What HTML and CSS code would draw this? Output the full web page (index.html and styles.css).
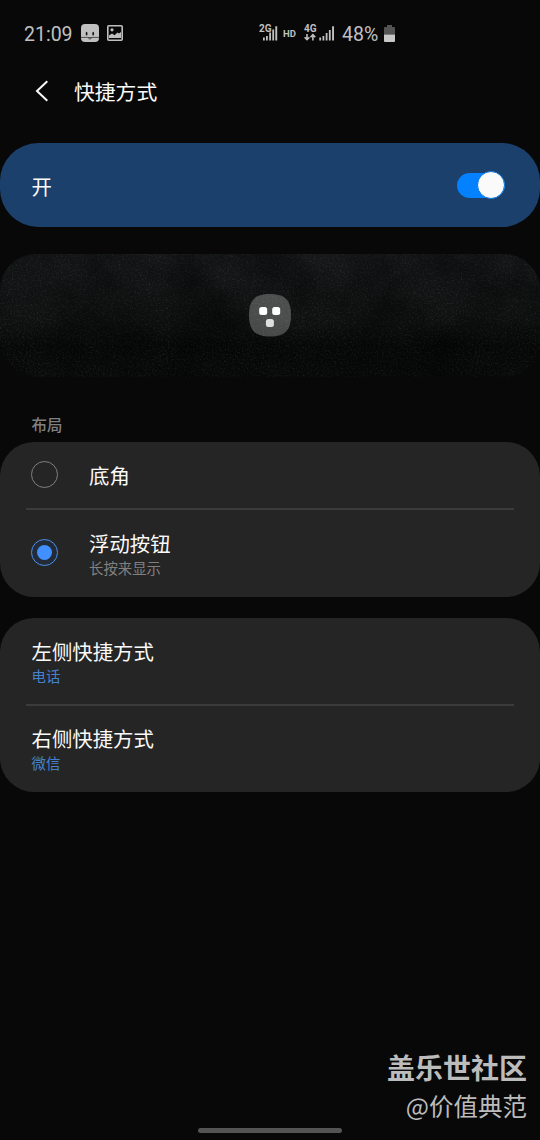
FILE: index.html
```html
<!DOCTYPE html>
<html lang="zh-CN">
<head>
<meta charset="utf-8">
<title>快捷方式</title>
<link rel="stylesheet" href="styles.css">
</head>
<body>
<div class="screen">
  <div class="status">
    <span class="clock">21:09</span>
    <svg class="bixby" width="18" height="18" viewBox="0 0 18 18"><path fill="#c0c0c0" d="M4 0h10q4 0 4 4v10q0 4-4 4H4q-4 0-4-4V4q0-4 4-4z"/><g fill="#161616"><ellipse cx="5.600" cy="9.700" rx=".9" ry="1.900"/><ellipse cx="12.200" cy="9.700" rx=".9" ry="1.900"/></g><path fill="none" stroke="#222" stroke-width=".7" d="M0 13.400h6.800q2.100 3.400 4.200 0h7M7 13.500h4"/></svg>
    <svg class="photo" width="16" height="16" viewBox="0 0 16 16"><rect x=".8" y=".8" width="14.400" height="14.400" rx="1" fill="none" stroke="#c0c0c0" stroke-width="1.600"/><path fill="#c0c0c0" d="M2 13v-2.500l3-2 2.500 1.800L10.500 7.500l1.500 1L14 7v6z"/><circle cx="5" cy="4.800" r="1.600" fill="#c0c0c0"/></svg>
    <svg class="signal" width="82" height="20" viewBox="0 0 82 20" fill="#c0c0c0">
      <text x="0" y="9" class="net">2G</text>
      <path d="M4 14.500h1.800V17.500H4zM7 13h1.800v4.500H7zM10.200 9.500H12v8h-1.800zM13.300 6.500h1.800v11h-1.800zM16.300 3.300h1.900v14.200h-1.900z"/>
      <text x="24" y="13.500" class="hd">HD</text>
      <text x="45" y="9" class="net">4G</text>
      <path fill="none" stroke="#c0c0c0" stroke-width="1.600" d="M48 11v6M45.600 14.200l2.400 2.500 2.400-2.500M53.900 17.500v-6M51.500 14.200l2.400-2.500 2.400 2.500"/>
      <path d="M60.300 14.500h1.800v3h-1.800zM63.500 13h1.800v4.500h-1.800zM66.700 10h1.800v7.500h-1.800zM69.900 7h1.800v10.500h-1.800zM73.100 3.300H75v14.200h-1.900z"/>
    </svg>
    <span class="percent">48%</span>
    <svg class="battery" width="11" height="17" viewBox="0 0 11 17"><path fill="#545454" d="M3 0h5v2h2q1 0 1 1v6.500H0V3q0-1 1-1h2z"/><path fill="#c8c8c8" d="M0 9.500h11V16q0 1-1 1H1q-1 0-1-1z"/></svg>
  </div>
  <header class="header">
    <svg width="14" height="22" viewBox="0 0 14 22"><path d="M12.300 1.300L2 11l10.300 9.700" fill="none" stroke="#fafafa" stroke-width="2"/></svg>
    <h1 class="title">快捷方式</h1>
  </header>
  <section class="master">
    <span class="label">开</span>
    <span class="toggle"><span class="knob"></span></span>
  </section>
  <section class="preview">
    <svg class="texture" width="540" height="124">
      <filter id="grain" x="0" y="0" width="100%" height="100%"><feTurbulence type="fractalNoise" baseFrequency=".57" numOctaves="4" seed="8"/><feColorMatrix values=".5 .5 0 0 -.12  .5 .5 0 0 -.1  .5 .5 0 0 -.1  2 0 0 0 -.9"/></filter>
      <filter id="stain" x="0" y="0" width="100%" height="100%"><feTurbulence type="fractalNoise" baseFrequency=".017 .02" numOctaves="5" seed="31"/><feColorMatrix values="0 0 0 0 0  0 0 0 0 0  0 0 0 0 0  1.800 0 0 0 -.6"/></filter>
      <rect width="540" height="124" filter="url(#grain)" opacity=".13"/>
      <rect width="540" height="124" filter="url(#stain)" opacity=".5"/>
    </svg>
    <svg class="launcher" width="44" height="44" viewBox="0 0 44 44"><path fill="#fff" fill-opacity=".25" d="M22 1C37 1 43 7 43 22S37 43.500 22 43.500 1 37 1 22 7 1 22 1z"/><g fill="#fff"><rect x="11.200" y="14" width="8" height="8" rx="2.500"/><rect x="24.200" y="14" width="8" height="8" rx="2.500"/><rect x="17.900" y="26" width="8" height="8" rx="2.500" fill="#dedede"/></g></svg>
  </section>
  <h2 class="section">布局</h2>
  <section class="card layout">
    <div class="option first"><span class="radio"></span><span class="label">底角</span></div>
    <hr class="divider">
    <div class="option second"><span class="radio checked"></span><div class="texts"><span class="label">浮动按钮</span><span class="sub">长按来显示</span></div></div>
  </section>
  <section class="card links">
    <div class="link"><span class="label">左侧快捷方式</span><span class="sub blue">电话</span></div>
    <hr class="divider">
    <div class="link last"><span class="label">右侧快捷方式</span><span class="sub blue">微信</span></div>
  </section>
  <div class="watermark"><span class="community">盖乐世社区</span><span class="author">@价值典范</span></div>
  <div class="gesture"></div>
</div>
</body>
</html>
```

FILE: styles.css
```css
* { box-sizing: border-box; }
body { margin: 0; background: #080808; }
.screen {
  position: relative;
  display: flex;
  flex-direction: column;
  width: 540px;
  height: 1140px;
  overflow: hidden;
  background: #080808;
  color: #fafafa;
  font-family: Roboto, "Noto Sans CJK SC", sans-serif;
}
.status {
  display: flex;
  align-items: center;
  height: 66px;
  padding-left: 24px;
  color: #c0c0c0;
}
.clock { width: 57px; padding-top: 2px; font-size: 19.5px; }
.photo { margin-left: 8px; }
.signal { margin-left: 136px; }
.net { font: bold 10px Roboto, sans-serif; }
.hd { font: bold 9.5px Roboto, sans-serif; }
.percent { width: 42px; margin-left: 1px; padding-top: 2px; font-size: 19.5px; }
.battery { flex: none; }
.header {
  display: flex;
  align-items: center;
  gap: 25px;
  height: 50px;
  padding-left: 35px;
}
.title { margin: 0; font-size: 20.8px; font-weight: 400; }
.master {
  display: flex;
  align-items: center;
  justify-content: space-between;
  height: 84px;
  margin-top: 27.4px;
  padding: 0 35px 0 31.5px;
  border-radius: 38px;
  background: #1b406b;
}
.label { font-size: 20.4px; line-height: 30px; }
.master .label, .first .label { padding-top: 5px; }
.toggle {
  display: flex;
  align-items: center;
  justify-content: flex-end;
  width: 48px;
  height: 25px;
  border-radius: 13px;
  background: #0381fe;
}
.knob {
  flex: none;
  width: 28px;
  height: 28px;
  border: 1px solid #0875e0;
  border-radius: 50%;
  background: #fafafa;
}
.preview {
  position: relative;
  display: flex;
  align-items: center;
  justify-content: center;
  height: 123px;
  margin-top: 26.2px;
  overflow: hidden;
  border-radius: 36px;
  background: linear-gradient(#151718, #0f1111 55%, #070808 75%, #090a0a);
}
.texture { position: absolute; inset: 0; }
.launcher { position: relative; }
.section {
  height: 24px;
  margin: 37px 0 4px 31.5px;
  color: #808080;
  font-size: 15.4px;
  font-weight: 500;
  line-height: 24px;
}
.card { border-radius: 34px; background: #252525; }
.layout { height: 155px; }
.option {
  display: flex;
  align-items: center;
  gap: 31px;
  padding-left: 31px;
}
.first { height: 66px; }
.second { height: 86px; }
.radio {
  display: flex;
  width: 27px;
  height: 27px;
  border: 1.5px solid #808080;
  border-radius: 50%;
}
.checked {
  align-items: center;
  justify-content: center;
  border-color: #4b91ee;
  background: #222b37;
}
.checked::after {
  width: 15px;
  height: 15px;
  border-radius: 50%;
  background: #4290ff;
  content: "";
}
.divider {
  height: 2px;
  margin: 0 26px;
  border: 0;
  background: #3b3b3b;
}
.texts, .link { display: flex; flex-direction: column; }
.texts { padding-top: 4px; }
.sub { color: #808080; font-size: 14.4px; line-height: 20px; }
.blue { color: #4482d0; }
.links { height: 174px; margin-top: 21px; }
.link {
  justify-content: center;
  height: 86px;
  padding: 5px 0 0 31.5px;
}
.last { padding-top: 2px; }
.watermark {
  position: absolute;
  right: 13px;
  bottom: 17px;
  display: flex;
  flex-direction: column;
  align-items: flex-end;
  color: #bcbcbc;
}
.community { font-size: 28px; font-weight: 700; line-height: 38px; }
.author { font-family: "Noto Sans CJK SC", sans-serif; font-size: 24.5px; line-height: 34px; }
.gesture {
  width: 144px;
  height: 5px;
  margin: auto auto 7px;
  border-radius: 3px;
  background: #545454;
}
```
